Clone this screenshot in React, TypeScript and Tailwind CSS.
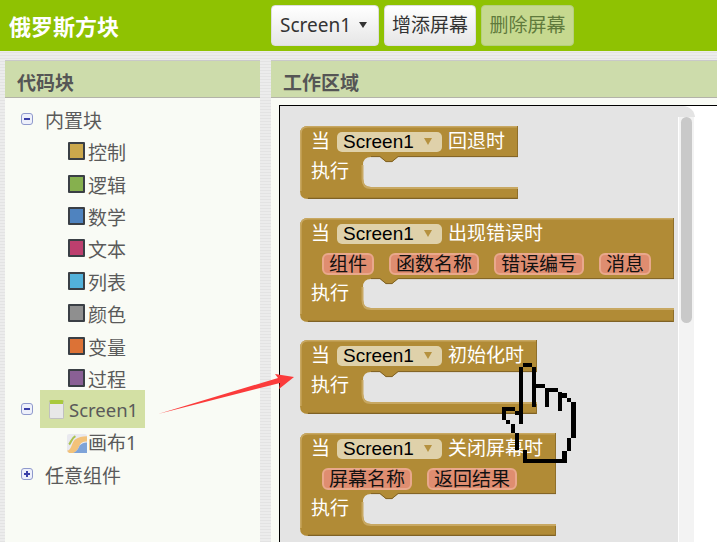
const F = "#b18b36";

function blockPath(w: number, h: number, st: number, sb: number) {
  return `M8 0H${w}V${st}H98L92 ${st + 5}H86L80 ${st}H71Q63 ${st} 63 ${st + 8}V${sb - 8}Q63 ${sb} 71 ${sb}H${w}V${h}H8Q0 ${h} 0 ${h - 8}V8Q0 0 8 0Z`;
}

function Dropdown() {
  return (
    <div className="w-[105px] h-[20px] rounded-[5px] bg-[#dfd1aa] flex items-center justify-between pl-[6px] pr-[10px] [font-family:'Liberation_Sans',sans-serif] text-[19px] text-black shrink-0">
      <span>Screen1</span>
      <span className="w-0 h-0 border-l-[4px] border-r-[4px] border-t-[7px] border-l-transparent border-r-transparent border-t-[#b5913f]" />
    </div>
  );
}

function Pill({ children }: { children: string }) {
  return (
    <span className="h-[22px] px-[5px] rounded-[6px] bg-[#df8d70] border-[2px] border-[#e9a88c] text-[#111] text-[19px] leading-none flex items-center justify-center whitespace-nowrap">
      {children}
    </span>
  );
}

function Block({ w, h, st, sb, label, params, mt }: { w: number; h: number; st: number; sb: number; label: string; params?: string[]; mt: string }) {
  return (
    <div className={`relative shrink-0 ${mt}`} style={{ width: w, height: h }}>
      <svg className="absolute inset-0" width={w} height={h} viewBox={`0 0 ${w} ${h}`}>
        <path d={blockPath(w, h, st, sb)} fill={F} />
        <path d={`M.8 ${h - 8}V8Q.8 .8 8 .8H${w}`} fill="none" stroke="#c8a862" strokeWidth="1.6" />
        <path d={`M8 ${h - .6}H${w}`} fill="none" stroke="#7f6225" strokeWidth="1.2" />
        <path d={`M${w - .5} 0V${st}`} fill="none" stroke="#8f6f2a" strokeWidth="1" />
        <path d={`M${w - .5} ${sb}V${h}`} fill="none" stroke="#8f6f2a" strokeWidth="1" />
        <path d={`M62.5 ${st + 8}V${sb - 8}Q62.5 ${sb + 1} 71 ${sb + 1}H${w}`} fill="none" stroke="#c8a862" strokeWidth="2" />
        <path d={`M${w} ${st - .4}H98L92 ${st + 4.6}H86L80 ${st - .4}H71`} fill="none" stroke="#7f6225" strokeWidth="1" />
      </svg>
      <div className="relative flex flex-col text-[19px] leading-none">
        <div className="h-[30px] flex items-center pl-[11px] pt-[1px] text-white whitespace-nowrap">
          <span className="w-[26px]">当</span>
          <Dropdown />
          <span className="ml-[6px]">{label}</span>
        </div>
        {params && (
          <div className="h-[30px] flex items-center pl-[22px] pt-[2px] gap-[15px]">
            {params.map((p) => (
              <Pill key={p}>{p}</Pill>
            ))}
          </div>
        )}
        <div className="h-[30px] flex items-center pl-[11px] pt-[1px] text-white">执行</div>
      </div>
    </div>
  );
}

function Expander({ plus, nudge }: { plus?: boolean; nudge: string }) {
  return (
    <svg width="12" height="12" viewBox="0 0 12 12" className={`shrink-0 ${nudge}`}>
      <rect x=".5" y=".5" width="11" height="11" rx="2.5" fill="#eef0fb" stroke="#8f99cc" />
      <rect x="3" y="5" width="6" height="2" fill="#3a3fa8" />
      {plus && <rect x="5" y="3" width="2" height="6" fill="#3a3fa8" />}
    </svg>
  );
}

function Swatch({ c }: { c: string }) {
  return (
    <span className="w-[17px] h-[18px] rounded-[1px] border-[2px] border-[#3a3f45] shrink-0 mt-[-2px]" style={{ backgroundColor: c }} />
  );
}

const cats: [string, string][] = [
  ["控制", "#cba84c"],
  ["逻辑", "#86b04e"],
  ["数学", "#4f83bf"],
  ["文本", "#bd3f6e"],
  ["列表", "#52b2db"],
  ["颜色", "#8f8f8f"],
  ["变量", "#dc7236"],
  ["过程", "#8a6095"],
];

const hand: [number, number, number, number][] = [
  [523, 363, 9, 4],
  [519, 367, 4, 57],
  [532, 367, 4, 40],
  [536, 384, 9, 4],
  [545, 388, 4, 19],
  [549, 388, 9, 4],
  [558, 392, 4, 19],
  [562, 393, 5, 5],
  [567, 398, 4, 4],
  [571, 402, 5, 36],
  [567, 438, 4, 13],
  [562, 451, 5, 12],
  [523, 459, 39, 4],
  [523, 450, 4, 9],
  [515, 433, 4, 17],
  [511, 424, 4, 9],
  [506, 420, 4, 4],
  [502, 411, 4, 9],
  [502, 407, 13, 4],
  [515, 411, 4, 4],
];

export default function App() {
  return (
    <div className="relative w-[717px] h-[542px] overflow-hidden flex flex-col bg-[#e6e6e6] [font-family:'Noto_Sans','Noto_Sans_CJK_SC',sans-serif] bg-[repeating-linear-gradient(0deg,#e3e3e3_0,#e3e3e3_1px,#ececec_1px,#ececec_3px)]">
      <header className="h-[51px] shrink-0 bg-[#8fc202] flex items-center">
        <div className="w-[271px] pl-[9px] text-[22px] font-bold text-white leading-none">俄罗斯方块</div>
        <div className="flex gap-[5px] text-[19px] text-[#333] mt-[-1px]">
          <div className="w-[108px] h-[41px] rounded-[4px] border border-[#ddd] bg-gradient-to-b from-[#ffffff] to-[#e6e6e6] flex items-center justify-between pl-[8px] pr-[11px]">
            <span>Screen1</span>
            <span className="w-0 h-0 border-l-[4px] border-r-[4px] border-t-[6px] border-l-transparent border-r-transparent border-t-[#333]" />
          </div>
          <div className="w-[92px] h-[41px] rounded-[4px] border border-[#ddd] bg-gradient-to-b from-[#ffffff] to-[#e6e6e6] flex items-center justify-center whitespace-nowrap">增添屏幕</div>
          <div className="w-[93px] h-[41px] rounded-[4px] border border-[#b5cf7e] bg-[#c6d98f] text-[#5f7a3c] flex items-center justify-center whitespace-nowrap">删除屏幕</div>
        </div>
      </header>
      <div className="flex-1 min-h-0 flex gap-[11px] pt-[9px] pl-[5px]">
        <section className="w-[255px] shrink-0 flex flex-col border-t border-[#c9c9c9]">
          <div className="h-[37px] shrink-0 bg-[#cddcab] border-b border-[#b3b3a8] flex items-center pl-[12px] pt-[8px] text-[19px] font-bold text-[#555]">代码块</div>
          <div className="flex-1 bg-[#f9fbf5] pt-[6px] text-[19px] text-[#5a5a5a] leading-none">
            <div className="h-[32px] flex items-center pl-[16px] gap-[12px]">
              <Expander nudge="mt-[-2px]" />
              <span className="mt-[2px]">内置块</span>
            </div>
            {cats.map(([t, c]) => (
              <div key={t} className="h-[32.4px] flex items-center pl-[63px] gap-[3px]">
                <Swatch c={c} />
                <span className="mt-[3px]">{t}</span>
              </div>
            ))}
            <div className="h-[32px] flex items-center pl-[16px] gap-[7px]">
              <Expander nudge="mt-[-4px]" />
              <div className="h-[38px] w-[105px] shrink-0 mt-[-4px] bg-[#d3e0a4] flex items-center pl-[9px] gap-[5px] text-[18.5px]">
                <span className="w-[15px] h-[19px] rounded-[2px] border border-[#c0c0c0] bg-[#e8e8e8] border-t-[4px] border-t-[#a9c93e] shrink-0" />
                <span className="mt-[3px]">Screen1</span>
              </div>
            </div>
            <div className="h-[32.4px] flex items-center pl-[62px] gap-[1px]">
              <svg width="20" height="19" viewBox="0 0 19 18" className="shrink-0">
                <rect width="19" height="18" rx="2" fill="#e9e9ef" />
                <path d="M0 16C5 15 4 8 8 5c3-2 6-3 11-3v5c-4 0-6 1-7 4-1 2-3 7-6 7H2z" fill="#f2c27a" />
                <path d="M8 2c-4 2-4 6-6 8" fill="none" stroke="#a9c24f" strokeWidth="2" />
                <path d="M6 18c3-1 5-4 6-7 2-2 4-3 7-3v10z" fill="#7ea3d8" />
              </svg>
              <span className="mt-[1px]">画布1</span>
            </div>
            <div className="h-[33px] flex items-center pl-[16px] gap-[12px]">
              <Expander plus nudge="mt-[-4px]" />
              <span>任意组件</span>
            </div>
          </div>
        </section>
        <section className="flex-1 min-w-0 flex flex-col border-t border-[#c9c9c9]">
          <div className="h-[37px] shrink-0 bg-[#cddcab] border-b border-[#b3b3a8] flex items-center pl-[12px] pt-[8px] text-[19px] font-bold text-[#555]">工作区域</div>
          <div className="flex-1 min-h-0 bg-[#f9fbf5] pt-[7px] pl-[8px] flex">
            <div className="flex-1 min-w-0 bg-white border-l border-t border-black">
              <div className="relative w-[415px] h-full bg-[#e4e4e4] rounded-tr-[12px] pl-[20px] pt-[20px] flex flex-col">
                <Block w={218} h={73} st={31} sb={61} label="回退时" mt="mt-0" />
                <Block
                  w={374}
                  h={104}
                  st={61}
                  sb={90}
                  label="出现错误时"
                  params={["组件", "函数名称", "错误编号", "消息"]}
                  mt="mt-[19px]"
                />
                <Block w={237} h={74} st={32} sb={62} label="初始化时" mt="mt-[18px]" />
                <Block w={256} h={103} st={61} sb={91} label="关闭屏幕时" params={["屏幕名称", "返回结果"]} mt="mt-[19px]" />
                <div className="absolute right-0 top-[11px] bottom-0 w-[17px] bg-[#f3f3f3] border-x border-white">
                  <div className="mx-auto mt-0 w-[11px] h-[206px] rounded-[6px] bg-[#c9c9c9]" />
                </div>
              </div>
            </div>
          </div>
        </section>
      </div>
      <svg className="absolute left-0 top-0 pointer-events-none" width="717" height="542" viewBox="0 0 717 542">
        <polygon points="158,414 278,378 275,374 294,377 279,389 280,383" fill="#fb3b3b" />
        <g shapeRendering="crispEdges" fill="#000">
          {hand.map(([x, y, w, h], i) => (
            <rect key={i} x={x} y={y} width={w} height={h} />
          ))}
        </g>
      </svg>
    </div>
  );
}
